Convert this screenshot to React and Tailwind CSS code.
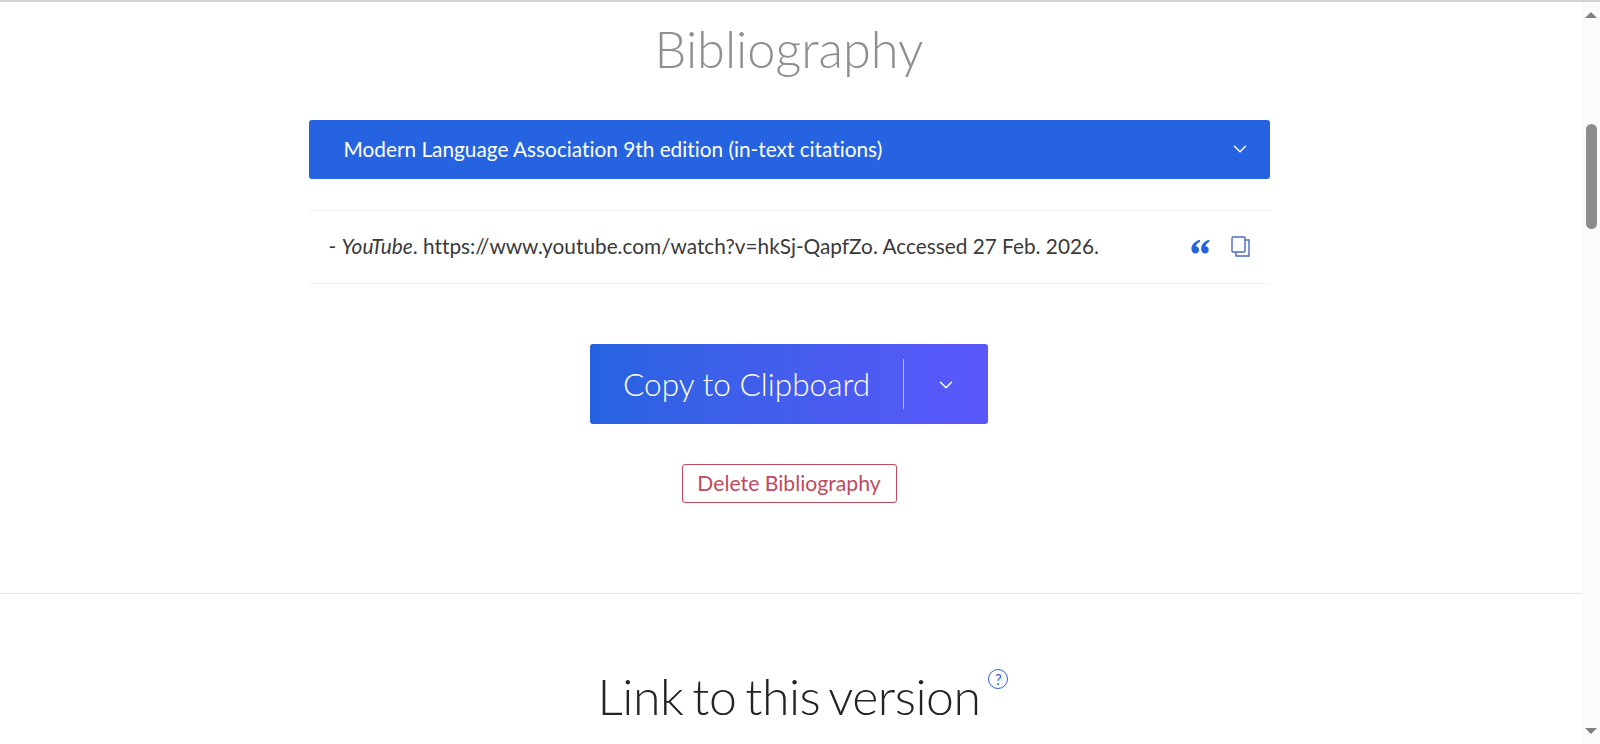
import React from 'react';
import { ChevronDown } from 'lucide-react';

const Scrollbar = () => (
  <div className="w-[18px] shrink-0 h-full flex flex-col items-center bg-[#fbfbfb]">
    <div className="mt-[10px] w-0 h-0 border-x-[6px] border-x-transparent border-b-[6px] border-b-[#808080]" />
    <div className="mt-[106px] w-[11px] h-[105px] rounded-full bg-[#8c8c8c]" />
    <div className="mt-auto mb-[10px] w-0 h-0 border-x-[6px] border-x-transparent border-t-[6px] border-t-[#808080]" />
  </div>
);

const QuoteIcon = () => (
  <svg width="19" height="15" viewBox="0 0 18 14" fill="#2563e0">
    <path d="M8.2 0.6 C4.2 2 0.4 4.8 0.4 9.4 C0.4 12 2 13.6 4.1 13.6 C6.1 13.6 7.6 12.2 7.6 10.2 C7.6 8.3 6.3 6.9 4.4 6.8 C4.8 5 6.4 3.4 8.8 2.2 Z" />
    <path d="M17 0.6 C13 2 9.6 4.8 9.6 9.4 C9.6 12 11.2 13.6 13.3 13.6 C15.3 13.6 16.8 12.2 16.8 10.2 C16.8 8.3 15.5 6.9 13.6 6.8 C14 5 15.6 3.4 17.6 2.2 Z" />
  </svg>
);

const CopyIcon = () => (
  <svg width="19" height="21" viewBox="0 0 19 21" fill="none" stroke="#4b6cc4" strokeWidth="1.4">
    <rect x="1" y="1" width="13" height="15" rx="1" />
    <path d="M14 4 H18 V20 H5 V16" />
  </svg>
);

export default function App() {
  return (
    <div className="h-screen flex flex-col overflow-hidden bg-white text-[#212529] font-['Lato','Noto_Sans',sans-serif] [font-variant-ligatures:none]">
      <div className="h-[2px] shrink-0 bg-[#d4d4d4]" />
      <div className="flex-1 flex min-h-0">
        <main className="flex-1 min-w-0 flex flex-col items-center pr-[4px]">
          <h2 className="mt-[14px] h-[66px] text-[50.5px] leading-[66px] font-light text-[#8f8f8f]">Bibliography</h2>

          <div className="mt-[38px] w-[961px] h-[59px] flex items-center justify-between pl-[35px] pr-[19px] pb-[2px] rounded-[3px] bg-[#2563e0] text-white text-[20.8px]">
            <span>Modern Language Association 9th edition (in-text citations)</span>
            <ChevronDown size={22} strokeWidth={1.6} />
          </div>

          <div className="mt-[31px] w-[961px] h-[74px] flex items-center justify-between pl-[20px] pr-[20px] pb-[2px] border-y border-[#f0f0f0] text-[20.8px] text-[#3a3a3a]">
            <span>- <em>YouTube</em>. https://www.youtube.com/watch?v=hkSj-QapfZo. Accessed 27 Feb. 2026.</span>
            <div className="flex items-center gap-[21px]">
              <QuoteIcon />
              <CopyIcon />
            </div>
          </div>

          <div className="mt-[60px] w-[398px] h-[80px] flex items-center rounded-[3px] bg-gradient-to-r from-[#2563e0] to-[#5a57fb] text-white">
            <span className="pl-[33px] pt-[2px] w-[313px] text-[31.6px] font-light">Copy to Clipboard</span>
            <div className="w-px h-[50px] bg-white/60" />
            <div className="flex-1 flex justify-center pt-[2px]">
              <ChevronDown size={22} strokeWidth={1.6} />
            </div>
          </div>

          <button className="mt-[40px] w-[215px] h-[39px] rounded-[3px] border border-[#bf4a5c] text-[#c04a5e] text-[21.2px]">
            Delete Bibliography
          </button>

          <div className="mt-[90px] w-[calc(100%+4px)] self-start h-px bg-[#e6e6e6]" />

          <div className="mt-[69px] relative">
            <h2 className="text-[50px] leading-[66px] font-light text-[#212529] tracking-[-0.5px] [word-spacing:-4px]">Link to this version</h2>
            <span className="absolute left-full top-[6px] ml-[8px] w-[20px] h-[20px] rounded-full border border-[#2f5fc8] text-[#2f5fc8] text-[15px] leading-[18px] text-center">?</span>
          </div>
        </main>
        <Scrollbar />
      </div>
    </div>
  );
}
